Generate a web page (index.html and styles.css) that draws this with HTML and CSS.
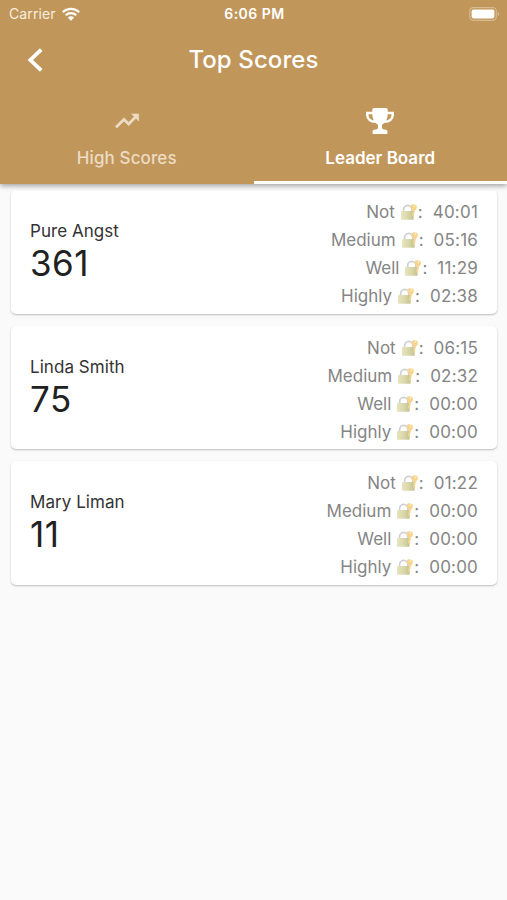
FILE: index.html
```
<!DOCTYPE html>
<html lang="en">
<head>
    <meta charset="UTF-8">
    <meta name="viewport" content="width=device-width, initial-scale=1.0">
    <title>Top Scores</title>
    <link rel="stylesheet" href="styles.css">
</head>
<body>
    <svg class="defs" aria-hidden="true">
        <defs>
            <linearGradient id="lock-body" x1="0" x2="1">
                <stop offset="0" stop-color="#e8e4bf"/>
                <stop offset="0.5" stop-color="#dbd8ac"/>
                <stop offset="1" stop-color="#c3c28e"/>
            </linearGradient>
            <symbol id="lock" viewBox="0 0 18 18">
                <path d="M3.6 9V6.6a4.1 4.3 0 0 1 8.2 0V9" fill="none" stroke="#cdd0d2" stroke-width="1.7"/>
                <path d="M13.9 6l-1.4 8" stroke="#f4d594" stroke-width="2.2"/>
                <rect x="1" y="8" width="12.6" height="8.8" rx="0.9" fill="url(#lock-body)"/>
                <path d="M10.7 3.2q0-2 2.2-1.9l2.6.4q1.7.4 1.4 2.2l-.5 2q-.5 1.500-2.2 1.2l-1.9-.4q-1.6-.5-1.6-2z" fill="#f8d48c"/>
                <path d="M14 7l-1.2 6.5" stroke="#f6d794" stroke-width="1.6"/>
                <circle cx="14.5" cy="3.2" r="0.8" fill="#fff3d6"/>
            </symbol>
        </defs>
    </svg>

    <header class="app-bar">
        <div class="status-bar">
            <div class="carrier">
                <span>Carrier</span>
                <svg class="wifi" viewBox="0 0 18 14">
                    <path d="M0.8 5.2a11.7 11.7 0 0 1 16.4 0M3.7 8.2a7.6 7.6 0 0 1 10.6 0" fill="none" stroke="#fff" stroke-width="2.2"/>
                    <path d="M9 13.8L5.8 10.6a4.6 4.6 0 0 1 6.4 0z" fill="#fff"/>
                </svg>
            </div>
            <div class="clock">6:06 PM</div>
            <svg class="battery" viewBox="0 0 31 14">
                <rect x="0.7" y="0.7" width="26.6" height="12.6" rx="3.6" fill="none" stroke="#d6b98e" stroke-width="1.2"/>
                <rect x="2.6" y="2.6" width="22.8" height="8.8" rx="1.8" fill="#fff"/>
                <path d="M28.8 4.8a2.4 2.4 0 0 1 0 4.4z" fill="#d6b98e"/>
            </svg>
        </div>
        <div class="title-bar">
            <svg class="back" viewBox="0 0 16 24">
                <path d="M14.2 1.6L3.4 12l10.8 10.4" fill="none" stroke="#fff" stroke-width="3.8"/>
            </svg>
            <h1>Top Scores</h1>
        </div>
        <nav class="tabs">
            <div class="tab">
                <svg class="trend" viewBox="0 0 24 24"><path d="M16 6l2.29 2.29-4.88 4.88-4-4L2 16.59 3.41 18l6-6 4 4 6.3-6.29L22 12V6z" fill="currentColor" stroke="currentColor" stroke-width="0.5"/></svg>
                <span>High Scores</span>
            </div>
            <div class="tab active">
                <svg class="trophy" viewBox="0 0 28 26">
                    <path d="M7 5H1.3v2.5c0 3.5 3.5 6.2 8.2 6.2M21 5h5.7v2.5c0 3.5-3.5 6.2-8.2 6.2" fill="none" stroke="currentColor" stroke-width="2.5"/>
                    <path d="M8 0h12q1.7 0 1.7 1.5v4c0 5.5-2 9.2-5.7 11.2v3q0 1.8 2 1.8h1q2.500 0 2.500 2.500v1.200q0 .8-.8.8H7.300q-.8 0-.8-.8V24q0-2.500 2.500-2.500h1q2 0 2-1.800v-3c-3.700-2-5.700-5.700-5.700-11.200v-4Q6.300 0 8 0z" fill="currentColor"/>
                </svg>
                <span>Leader Board</span>
            </div>
        </nav>
    </header>

    <main class="board">
        <section class="card">
            <div class="player">
                <div class="name">Pure Angst</div>
                <div class="score">361</div>
            </div>
            <div class="times">
                <div class="row">Not <svg><use href="#lock"/></svg>: <span>40:01</span></div>
                <div class="row">Medium <svg><use href="#lock"/></svg>: <span>05:16</span></div>
                <div class="row">Well <svg><use href="#lock"/></svg>: <span>11:29</span></div>
                <div class="row">Highly <svg><use href="#lock"/></svg>: <span>02:38</span></div>
            </div>
        </section>
        <section class="card">
            <div class="player">
                <div class="name">Linda Smith</div>
                <div class="score">75</div>
            </div>
            <div class="times">
                <div class="row">Not <svg><use href="#lock"/></svg>: <span>06:15</span></div>
                <div class="row">Medium <svg><use href="#lock"/></svg>: <span>02:32</span></div>
                <div class="row">Well <svg><use href="#lock"/></svg>: <span>00:00</span></div>
                <div class="row">Highly <svg><use href="#lock"/></svg>: <span>00:00</span></div>
            </div>
        </section>
        <section class="card">
            <div class="player">
                <div class="name">Mary Liman</div>
                <div class="score">11</div>
            </div>
            <div class="times">
                <div class="row">Not <svg><use href="#lock"/></svg>: <span>01:22</span></div>
                <div class="row">Medium <svg><use href="#lock"/></svg>: <span>00:00</span></div>
                <div class="row">Well <svg><use href="#lock"/></svg>: <span>00:00</span></div>
                <div class="row">Highly <svg><use href="#lock"/></svg>: <span>00:00</span></div>
            </div>
        </section>
    </main>
</body>
</html>
```
FILE: styles.css
```
* {
    box-sizing: border-box;
}
body {
    margin: 0;
    min-height: 900px;
    background-color: #fafafa;
    font-family: Inter, "Liberation Sans", sans-serif;
    color: #212121;
}
.defs {
    display: block;
    width: 0;
    height: 0;
}
.app-bar {
    height: 184px;
    background-color: #c1965a;
    color: #fff;
    box-shadow: 0 2px 5px rgba(0, 0, 0, 0.35);
}
.status-bar {
    display: grid;
    grid-template-columns: 1fr auto 1fr;
    align-items: center;
    height: 27px;
    padding: 0 7px 0 9px;
    font-size: 14px;
}
.carrier {
    display: flex;
    align-items: center;
    gap: 6px;
    color: #f8eedf;
    letter-spacing: 0.1px;
}
.wifi {
    width: 18px;
    height: 14px;
}
.clock {
    font-size: 14px;
    font-weight: 600;
    letter-spacing: 0.5px;
}
.battery {
    width: 31px;
    height: 14px;
    justify-self: end;
}
.title-bar {
    display: grid;
    grid-template-columns: 60px 1fr 60px;
    align-items: center;
    height: 65px;
}
.back {
    width: 16px;
    height: 24px;
    margin-left: 27px;
}
h1 {
    margin: 0;
    font-size: 24px;
    font-weight: 500;
    letter-spacing: 0.1px;
    text-align: center;
}
.tabs {
    display: flex;
    height: 92px;
}
.tab {
    flex: 1;
    display: flex;
    flex-direction: column;
    align-items: center;
    padding-top: 15px;
    border-bottom: 3px solid transparent;
    color: #ecdcc4;
    font-size: 17px;
    font-weight: 500;
    letter-spacing: 0.1px;
    line-height: 24px;
}
.trend {
    width: 30px;
    height: 28px;
    margin-bottom: 11px;
}
.trophy {
    width: 28px;
    height: 26px;
    margin: 1px 0 12px;
}
.tab.active {
    border-color: #fff;
    color: #fff;
    font-weight: 600;
    letter-spacing: 0;
}
.board {
    margin-top: 7px;
    padding: 0 10px 10px 11px;
    overflow: hidden;
}
.card {
    display: flex;
    justify-content: space-between;
    height: 123.5px;
    margin-bottom: 12px;
    padding: 8px 19px 0;
    background-color: #fff;
    border-radius: 5px;
    box-shadow: 0 1px 2px rgba(0, 0, 0, 0.25);
}
.card:first-child {
    margin-top: -1px;
}
.player {
    padding-top: 20px;
}
.name {
    font-size: 17px;
    letter-spacing: 0.05px;
    line-height: 26px;
    color: #333;
}
.score {
    font-size: 35px;
    letter-spacing: 0.5px;
    line-height: 38px;
}
.row {
    display: flex;
    align-items: center;
    justify-content: flex-end;
    height: 28.1px;
    color: #858585;
    font-size: 17px;
}
.row svg {
    width: 18px;
    height: 18px;
    margin-left: 5px;
}
.row span {
    margin-left: 10px;
    letter-spacing: 0.2px;
}
```
